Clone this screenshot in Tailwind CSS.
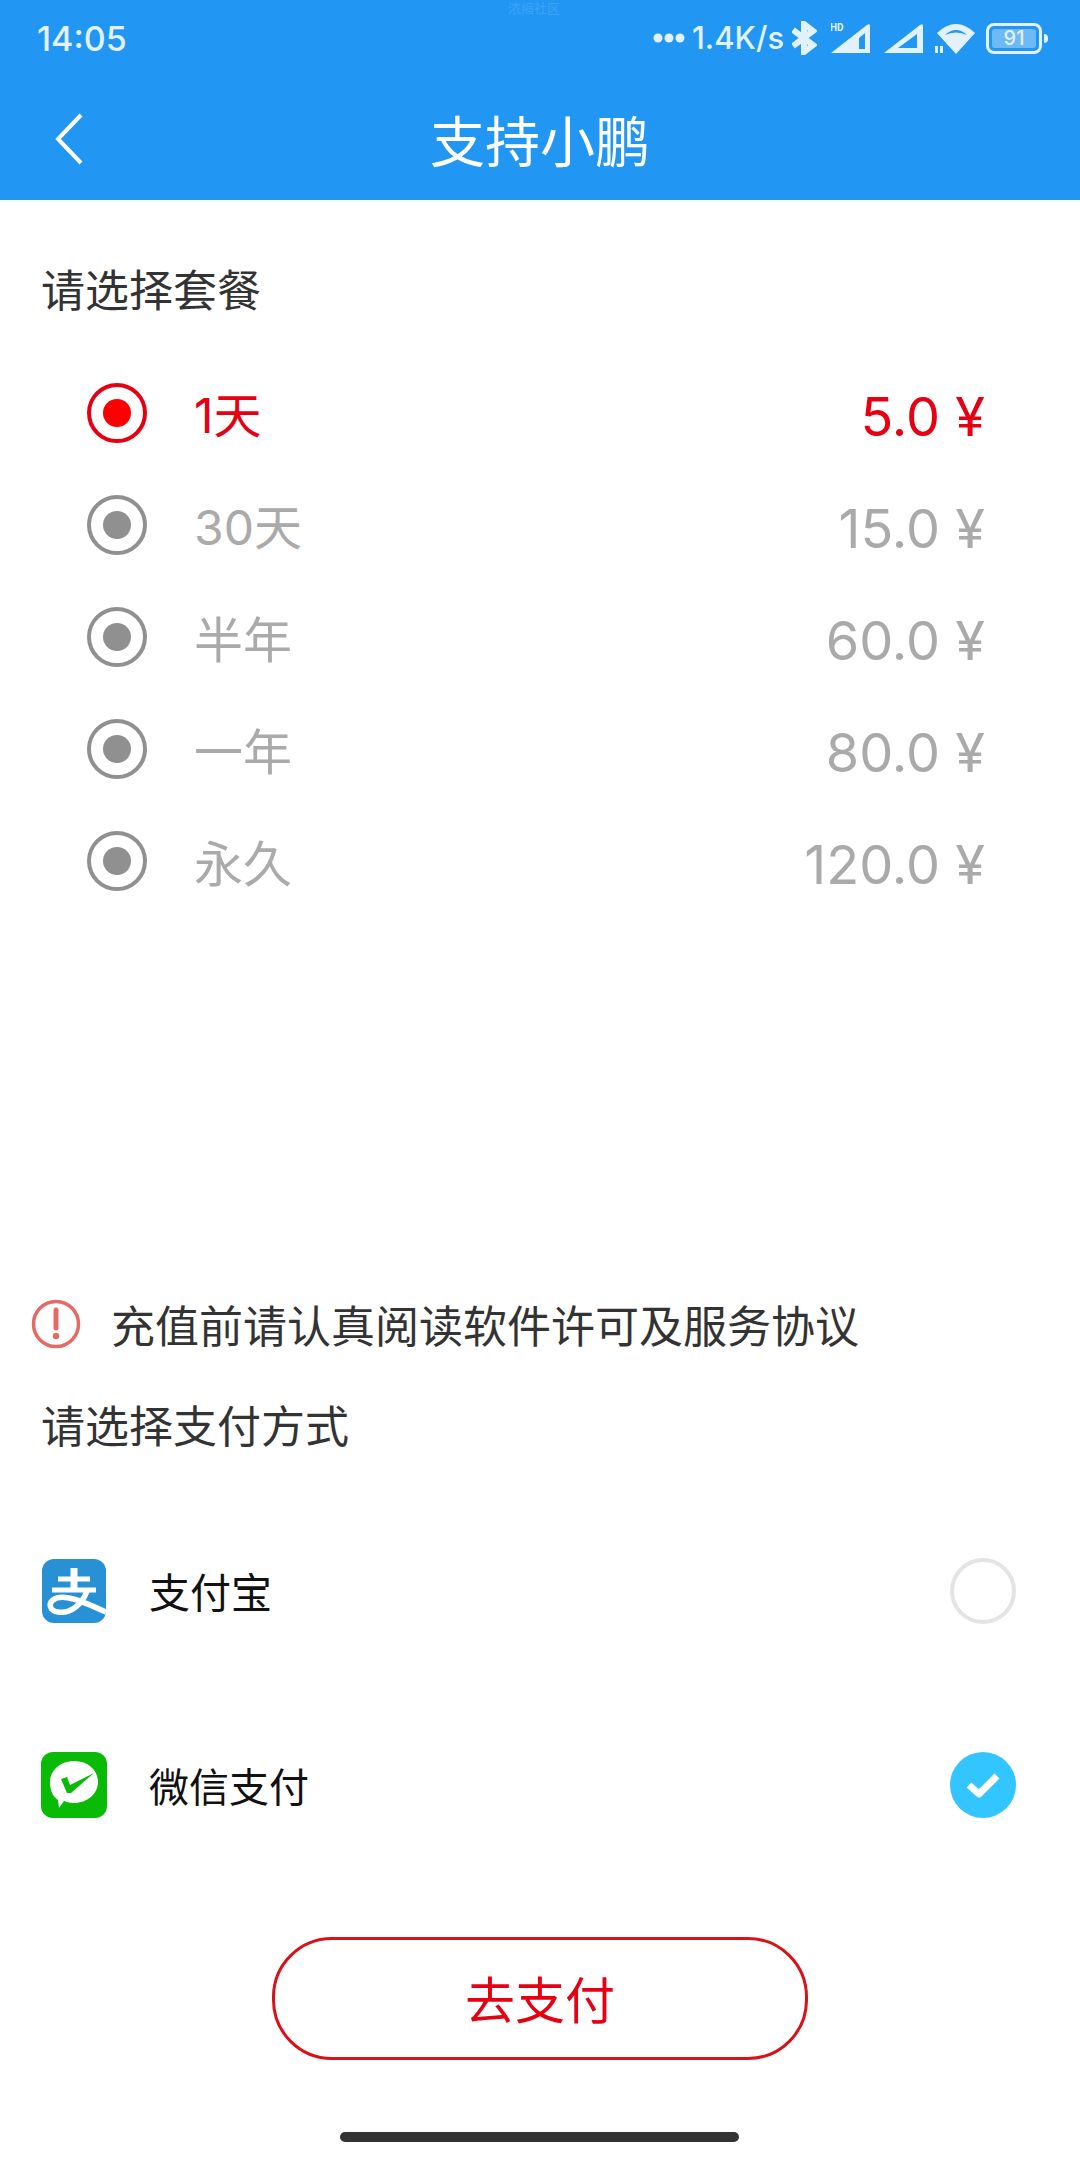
<!DOCTYPE html>
<html lang="zh-CN">

<head>
    <meta charset="UTF-8">
    <meta name="viewport" content="width=device-width, initial-scale=1.0">
    <title>支持小鹏</title>
    <script src="https://cdn.jsdelivr.net/npm/@tailwindcss/browser@4"></script>
</head>

<body class="w-[1080px] h-[2160px] bg-white overflow-hidden font-['Inter','Noto_Sans_CJK_SC',sans-serif]">
    <header class="relative h-[200px] bg-[#2196f3] text-white">
        <div class="absolute top-0 left-[508px] text-[13px] leading-[16px] text-white/15">浓缩社区</div>
        <!-- status bar -->
        <div class="h-[76px] pl-[37px] pr-[32px] flex items-center justify-between text-[#e3f1fd]">
            <span class="text-[34px] font-medium">14:05</span>
            <div class="flex items-center">
                <svg width="32" height="10" viewBox="0 0 32 10" class="mr-[7px]" fill="currentColor">
                    <circle cx="5" cy="5" r="4.5" /><circle cx="16" cy="5" r="4.5" /><circle cx="27" cy="5" r="4.5" />
                </svg>
                <span class="w-[94px] text-[31px] font-medium whitespace-nowrap">1.4K/s</span>
                <svg width="25" height="34" viewBox="0 0 25 34" class="ml-[6px]" fill="none" stroke="currentColor" stroke-width="6">
                    <path d="M1 9 L21 24 L12 31 V3 L21 10 L1 25" />
                </svg>
                <svg width="39" height="30" viewBox="0 0 39 30" class="ml-[14px]" fill="currentColor">
                    <text x="-1" y="8" font-size="10" font-weight="700" font-family="Roboto">HD</text>
                    <path fill-rule="evenodd" d="M0 30 L36 2 Q39 0 39 3 V30 Z M28 26 H34 V10 L28 15 Z" />
                </svg>
                <svg width="39" height="30" viewBox="0 0 39 30" class="ml-[14px]" fill="currentColor">
                    <path fill-rule="evenodd" d="M0 30 L36 2 Q39 0 39 3 V30 Z M14 25 H33 V11 Z" />
                </svg>
                <svg width="40" height="32" viewBox="0 0 40 32" class="ml-[12px]" fill="currentColor">
                    <rect x="0" y="24" width="3" height="7" /><rect x="5" y="24" width="3" height="7" />
                    <path fill-rule="evenodd" d="M2 11 Q21 -7 40 11 L21 32 Z M10 13 Q21 3 32 13 Q21 8 10 13 Z" />
                </svg>
                <div class="ml-[11px] w-[56px] h-[31px] border-[3px] border-[#e3f1fd] rounded-[8px] p-[3px] flex">
                    <div class="w-full h-full rounded-[3px] bg-[#e3f1fd]/40 flex items-center justify-center text-[20px] leading-none font-medium">91</div>
                </div>
                <div class="ml-[2px] w-[4px] h-[9px] rounded-r-full bg-[#e3f1fd]"></div>
            </div>
        </div>
        <!-- title bar -->
        <div class="relative h-[124px] flex items-center justify-center -mt-[1px]">
            <svg width="30" height="52" viewBox="0 0 30 52" class="absolute left-[54px] top-[38px]" fill="none" stroke="white" stroke-width="4">
                <path d="M27 2 L4 26 L27 50" />
            </svg>
            <h1 class="text-[55px] leading-none font-normal mt-[10px]">支持小鹏</h1>
        </div>
    </header>

    <main>
        <!-- plans -->
        <h2 class="mt-[60px] mb-[35px] ml-[41px] h-[62px] leading-[62px] text-[44px] text-[#333333]">请选择套餐</h2>
        <ul>
            <li class="h-[112px] flex items-center pl-[87px] pr-[95px] text-[#e60012]">
                <span class="w-[60px] h-[60px] rounded-full border-[4px] border-[#e60012] flex items-center justify-center"><span class="w-[28px] h-[28px] rounded-full bg-[#ff0000]"></span></span>
                <span class="ml-[47px] pt-[6px] text-[48px]">1天</span>
                <span class="ml-auto pt-[6px] text-[54px]">5.0 ¥</span>
            </li>
            <li class="h-[112px] flex items-center pl-[87px] pr-[95px] text-[#aaaaaa]">
                <span class="w-[60px] h-[60px] rounded-full border-[4px] border-[#909090] flex items-center justify-center"><span class="w-[28px] h-[28px] rounded-full bg-[#909090]"></span></span>
                <span class="ml-[47px] pt-[6px] text-[48px]">30天</span>
                <span class="ml-auto pt-[6px] text-[54px]">15.0 ¥</span>
            </li>
            <li class="h-[112px] flex items-center pl-[87px] pr-[95px] text-[#aaaaaa]">
                <span class="w-[60px] h-[60px] rounded-full border-[4px] border-[#909090] flex items-center justify-center"><span class="w-[28px] h-[28px] rounded-full bg-[#909090]"></span></span>
                <span class="ml-[47px] pt-[8px] text-[49px]">半年</span>
                <span class="ml-auto pt-[6px] text-[54px]">60.0 ¥</span>
            </li>
            <li class="h-[112px] flex items-center pl-[87px] pr-[95px] text-[#aaaaaa]">
                <span class="w-[60px] h-[60px] rounded-full border-[4px] border-[#909090] flex items-center justify-center"><span class="w-[28px] h-[28px] rounded-full bg-[#909090]"></span></span>
                <span class="ml-[47px] pt-[8px] text-[49px]">一年</span>
                <span class="ml-auto pt-[6px] text-[54px]">80.0 ¥</span>
            </li>
            <li class="h-[112px] flex items-center pl-[87px] pr-[95px] text-[#aaaaaa]">
                <span class="w-[60px] h-[60px] rounded-full border-[4px] border-[#909090] flex items-center justify-center"><span class="w-[28px] h-[28px] rounded-full bg-[#909090]"></span></span>
                <span class="ml-[47px] pt-[8px] text-[49px]">永久</span>
                <span class="ml-auto pt-[6px] text-[54px]">120.0 ¥</span>
            </li>
        </ul>

        <!-- notice -->
        <div class="mt-[376px] h-[62px] pl-[31px] flex items-center">
            <svg width="50" height="50" viewBox="0 0 50 50" fill="none">
                <circle cx="25" cy="25" r="22.5" stroke="#e46a64" stroke-width="3.5" />
                <path d="M25 11 V29" stroke="#e46a64" stroke-width="5" stroke-linecap="round" />
                <circle cx="25" cy="37" r="3.2" fill="#e46a64" />
            </svg>
            <span class="ml-[30px] pt-[5px] text-[44px] text-[#333333]">充值前请认真阅读软件许可及服务协议</span>
        </div>

        <!-- payment -->
        <h2 class="mt-[41px] mb-[37px] ml-[41px] h-[62px] leading-[62px] text-[44px] text-[#333333]">请选择支付方式</h2>
        <div class="h-[193px] pl-[42px] pr-[64px] flex items-center">
            <svg width="64" height="64" viewBox="0 0 64 64" class="rounded-[12px] -mt-[2px]">
                <rect width="64" height="64" fill="#2891d6" />
                <g fill="none" stroke="white">
                    <path d="M16 20 H48" stroke-width="5" />
                    <path d="M32 9 V31" stroke-width="7" />
                    <path d="M10 31 H54" stroke-width="5" />
                    <path d="M45 32 C40 46 28 55 16 53 C8 52 6 45 11 41 C20 34 38 41 66 54" stroke-width="5.5" />
                </g>
            </svg>
            <span class="ml-[43px] pt-[4px] text-[41px] text-[#111111]">支付宝</span>
            <span class="ml-auto w-[66px] h-[66px] rounded-full border-[4px] border-[#e4e4e4] -mt-[2px]"></span>
        </div>
        <div class="h-[193px] pl-[41px] pr-[64px] flex items-center">
            <svg width="66" height="66" viewBox="0 0 66 66">
                <rect width="66" height="66" rx="12" fill="#09bb07" />
                <path d="M33 9 C48 9 57 19 57 30 C57 42 46 51 33 51 C29 51 26 50 23 49 L18 56 L17 48 C11 44 9 37 9 30 C9 19 19 9 33 9 Z" fill="white" />
                <path d="M20 27 L26 25 L29 33 L53 21 L30 41 L26 41 Z" fill="#09bb07" />
            </svg>
            <span class="ml-[42px] pt-[6px] text-[40px] text-[#111111]">微信支付</span>
            <span class="ml-auto w-[66px] h-[66px] rounded-full bg-[#33c5ff] flex items-center justify-center">
                <svg width="34" height="26" viewBox="0 0 34 26" fill="none" stroke="white" stroke-width="7" stroke-linejoin="round">
                    <path d="M3 13 L13 22 L31 4" />
                </svg>
            </span>
        </div>

        <!-- submit -->
        <button class="block mt-[56px] ml-[272px] w-[536px] h-[123px] rounded-[60px] border-[3px] border-[#d81218] pt-[6px] text-[50px] text-[#e60012]">去支付</button>
    </main>

    <!-- home indicator -->
    <div class="mt-[72px] ml-[340px] w-[399px] h-[10px] rounded-full bg-[#333333]"></div>
</body>

</html>
